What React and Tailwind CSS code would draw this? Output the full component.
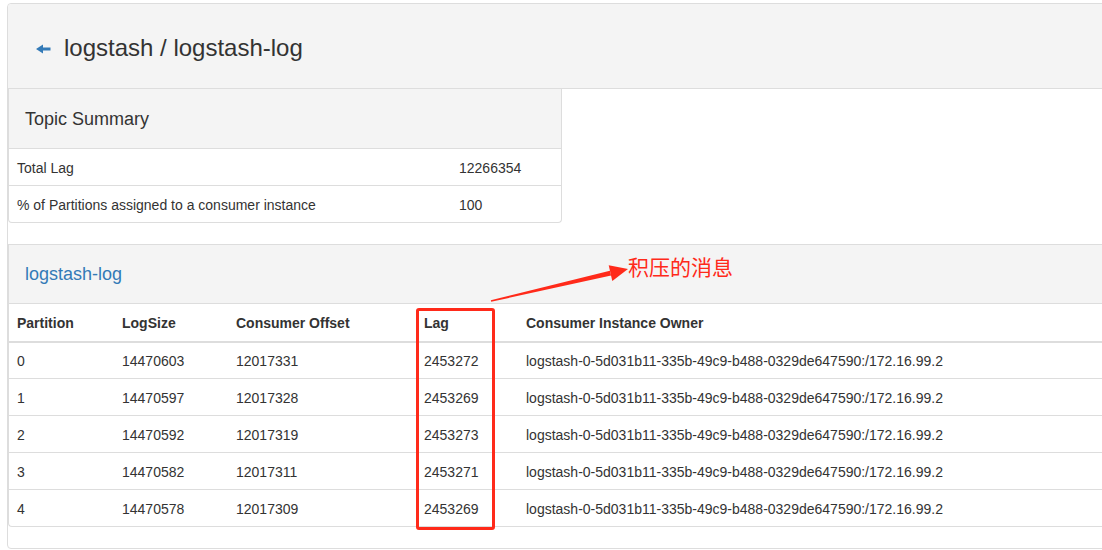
import React from "react";

const rows = [
  ["0", "14470603", "12017331", "2453272"],
  ["1", "14470597", "12017328", "2453269"],
  ["2", "14470592", "12017319", "2453273"],
  ["3", "14470582", "12017311", "2453271"],
  ["4", "14470578", "12017309", "2453269"],
];
const owner = "logstash-0-5d031b11-335b-49c9-b488-0329de647590:/172.16.99.2";

export default function App() {
  return (
    <div
      className="relative w-[1102px] h-[550px] overflow-hidden bg-white text-[#333]"
      style={{ fontFamily: '"Liberation Sans", Arial, sans-serif' }}
    >
      <div className="ml-[7px] mt-[3px] w-[1140px] h-[546px] border border-[#ddd] rounded-l-[4px]">
        {/* Page header */}
        <div className="h-[85px] bg-[#f4f4f4] border-b border-[#ddd] flex items-center pl-[28px] pt-[4px] rounded-tl-[4px]">
          <svg width="15" height="10" viewBox="0 0 15 10" className="mr-[13px] mt-[2px]">
            <polygon points="0,5 7,0.5 7,3.5 14.5,3.5 14.5,6.5 7,6.5 7,9.5" fill="#337ab7" />
          </svg>
          <h1 className="text-[24px] leading-none font-normal">logstash / logstash-log</h1>
        </div>

        {/* Topic summary panel */}
        <div className="w-[554px] border border-t-0 border-[#ddd] rounded-b-[4px] text-[14px]">
          <div className="h-[60px] bg-[#f4f4f4] border-b border-[#ddd] flex items-center pl-[16px] pt-[2px]">
            <span className="text-[18px]">Topic Summary</span>
          </div>
          <div className="flex h-[36px] items-center pt-[2px]">
            <div className="w-[442px] pl-[8px]">Total Lag</div>
            <div className="pl-[8px]">12266354</div>
          </div>
          <div className="flex h-[37px] items-center border-t border-[#ddd] pt-[2px]">
            <div className="w-[442px] pl-[8px]">% of Partitions assigned to a consumer instance</div>
            <div className="pl-[8px]">100</div>
          </div>
        </div>

        {/* Partitions panel */}
        <div className="mt-[21px] border border-r-0 border-[#ddd] rounded-bl-[4px] text-[14px]">
          <div className="h-[59px] bg-[#f4f4f4] border-b border-[#ddd] flex items-center pl-[16px] pt-[1px]">
            <span className="text-[18px] text-[#337ab7]">logstash-log</span>
          </div>
          <table className="table-fixed w-full border-collapse">
            <colgroup>
              <col className="w-[105px]" />
              <col className="w-[114px]" />
              <col className="w-[188px]" />
              <col className="w-[102px]" />
              <col />
            </colgroup>
            <thead>
              <tr className="h-[38px] border-b-2 border-[#ddd]">
                <th className="text-left font-bold px-[8px] pt-[1px] leading-[20px]">Partition</th>
                <th className="text-left font-bold px-[8px] pt-[1px] leading-[20px]">LogSize</th>
                <th className="text-left font-bold px-[8px] pt-[1px] leading-[20px]">Consumer Offset</th>
                <th className="text-left font-bold px-[8px] pt-[1px] leading-[20px]">Lag</th>
                <th className="text-left font-bold px-[8px] pt-[1px] leading-[20px]">Consumer Instance Owner</th>
              </tr>
            </thead>
            <tbody>
              {rows.map((r, i) => (
                <tr key={i} className={i === 0 ? "h-[36px]" : "h-[37px] border-t border-[#ddd]"}>
                  {r.map((c, j) => (
                    <td key={j} className="px-[8px] pt-[2px] leading-[20px]">{c}</td>
                  ))}
                  <td className="px-[8px] pt-[2px] leading-[20px] whitespace-nowrap">{owner}</td>
                </tr>
              ))}
            </tbody>
          </table>
        </div>
      </div>

      {/* Annotation overlay */}
      <div className="absolute left-[416px] top-[308px] w-[79px] h-[222px] border-[3px] border-[#ff2a1a] rounded-[3px]" />
      <svg className="absolute left-0 top-0 pointer-events-none" width="1102" height="550">
        <polygon points="490.8,300.2 609.9,270.7 611.1,275.5 491.2,301.8" fill="#ff2a1a" />
        <polygon points="628,269 608.7,265.3 612.3,280.9" fill="#ff2a1a" />
      </svg>
      <div
        className="absolute left-[628px] top-[256px] text-[21px] leading-none text-[#ff2a1a]"
        style={{ fontFamily: '"Noto Sans CJK SC", sans-serif' }}
      >
        积压的消息
      </div>
    </div>
  );
}
